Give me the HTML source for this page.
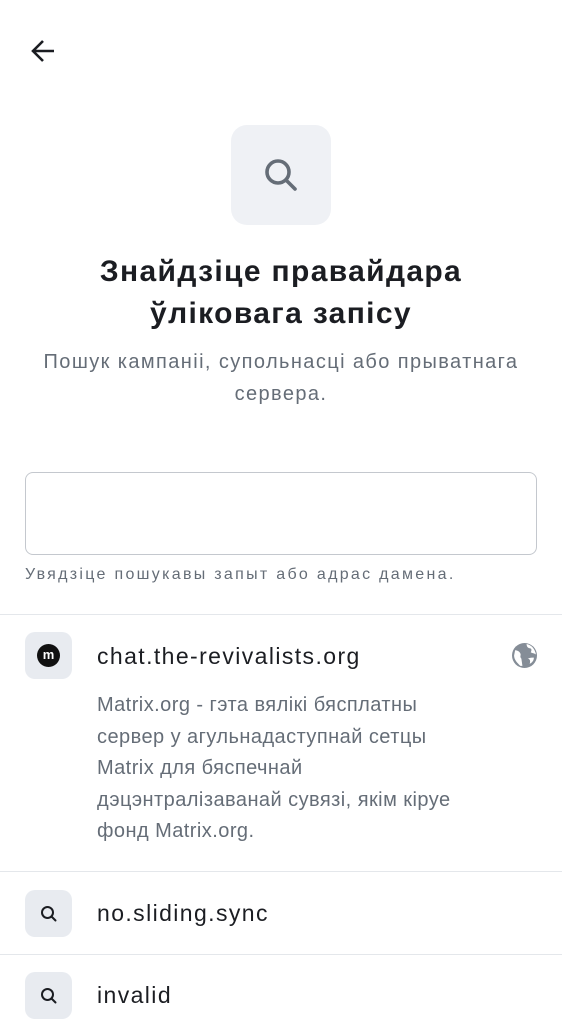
<!DOCTYPE html>
<html><head><meta charset="utf-8"><style>
*{margin:0;padding:0;box-sizing:border-box}
body{width:562px;height:1000px;overflow:hidden;background:#fff;font-family:"Liberation Sans","DejaVu Sans",sans-serif;color:#1b1d22;position:relative}
.a{position:absolute}
.ic{position:absolute;left:25px;width:47px;height:47px;border-radius:10px;background:#e8ebf0;display:flex;align-items:center;justify-content:center}
.hr{position:absolute;left:0;width:562px;height:1px;background:#e4e7eb}
.t{position:absolute;left:97px;font-size:23px;line-height:26px;color:#1b1d22;letter-spacing:1.4px}
</style></head><body>
<svg class="a" style="left:30px;top:38px" width="26" height="26" viewBox="0 0 26 26"><path d="M24 13H4M13 3L3 13l10 10" fill="none" stroke="#1b1d22" stroke-width="2.6"/></svg>
<div class="a" style="left:231px;top:125px;width:100px;height:100px;border-radius:16px;background:#eff1f5;display:flex;align-items:center;justify-content:center">
<svg width="40" height="40" viewBox="0 0 40 40"><circle cx="17" cy="17" r="11" fill="none" stroke="#656d77" stroke-width="3.6"/><path d="M25 25l9 9" stroke="#656d77" stroke-width="3.6" stroke-linecap="round"/></svg></div>
<div class="a" style="left:0;width:562px;top:251px;text-align:center;font-size:30px;font-weight:bold;line-height:42px;letter-spacing:1.35px">Знайдзіце правайдара<br>ўліковага запісу</div>
<div class="a" style="left:0;width:562px;top:346px;text-align:center;font-size:20px;line-height:32px;color:#656d77;letter-spacing:1.4px">Пошук кампаніі, супольнасці або прыватнага<br>сервера.</div>
<div class="a" style="left:25px;top:472px;width:512px;height:83px;border:1.5px solid #c4c8ce;border-radius:8px"></div>
<div class="a" style="left:25px;top:566px;font-size:16px;color:#656d77;letter-spacing:2.3px;white-space:nowrap">Увядзіце пошукавы запыт або адрас дамена.</div>
<div class="hr" style="top:614px"></div>
<div class="ic" style="top:632px"><div style="width:23px;height:23px;border-radius:50%;background:#111;color:#fff;font-size:13px;font-weight:bold;text-align:center;line-height:22px">m</div></div>
<div class="t" style="top:643px">chat.the-revivalists.org</div>
<svg class="a" style="left:512px;top:643px" width="25" height="25" viewBox="0 0 24 24"><circle cx="12" cy="12" r="12" fill="#858d97"/><path d="M3 7c2 0 4 1 5 3s-1 3 1 5l1 7H8C5 19 2 16 2 12zM14 1c0 2 1 4 3 4s2 2 1 4c2 1 4 1 5 2-1-5-4-9-9-10zM15 15c2 0 3 2 2 5 2-1 4-3 4-6-2 0-4 0-6 1z" fill="#fff"/></svg>
<div class="a" style="left:97px;top:690px;font-size:20px;line-height:31.5px;color:#656d77;width:440px;letter-spacing:0.45px;white-space:nowrap">Matrix.org - гэта вялікі бясплатны<br>сервер у агульнадаступнай сетцы<br>Matrix для бяспечнай<br>дэцэнтралізаванай сувязі, якім кіруе<br>фонд Matrix.org.</div>
<div class="hr" style="top:871px"></div>
<div class="ic" style="top:890px"><svg width="20" height="20" viewBox="0 0 20 20"><circle cx="8.5" cy="8.5" r="5.5" fill="none" stroke="#1b1d22" stroke-width="2"/><path d="M12.5 12.5l4 4" stroke="#1b1d22" stroke-width="2" stroke-linecap="round"/></svg></div>
<div class="t" style="top:900px">no.sliding.sync</div>
<div class="hr" style="top:954px"></div>
<div class="ic" style="top:972px"><svg width="20" height="20" viewBox="0 0 20 20"><circle cx="8.5" cy="8.5" r="5.5" fill="none" stroke="#1b1d22" stroke-width="2"/><path d="M12.5 12.5l4 4" stroke="#1b1d22" stroke-width="2" stroke-linecap="round"/></svg></div>
<div class="t" style="top:982px">invalid</div>
</body></html>
